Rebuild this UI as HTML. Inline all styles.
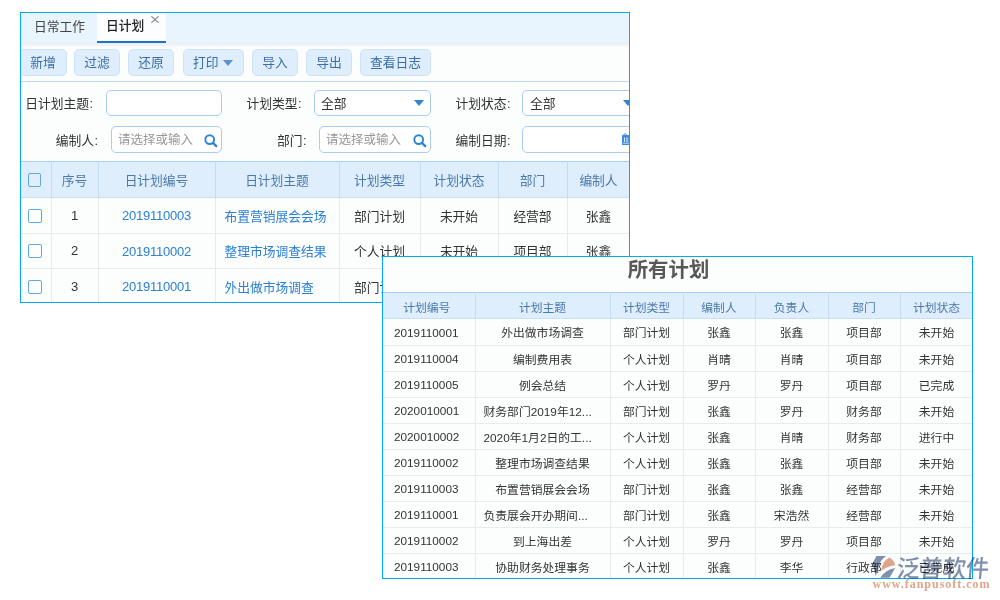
<!DOCTYPE html>
<html lang="zh-CN">
<head>
<meta charset="utf-8">
<title>日计划</title>
<style>
*{box-sizing:border-box;margin:0;padding:0}
html,body{width:1000px;height:600px;background:#fff;overflow:hidden}
body{position:relative;font-family:"Liberation Sans","Noto Sans CJK SC",sans-serif;color:#333}
.abs{position:absolute}
#p1{position:absolute;left:20px;top:12px;width:610px;height:291px;border:1px solid #04a9ee;background:#fcfdfd;overflow:hidden;font-size:12.75px}
#p1 .tabs{position:absolute;left:0;top:0;width:608px;height:30px;background:#e8f5fe}
#p1 .tabshadow{position:absolute;left:0;top:30px;width:608px;height:5px;background:linear-gradient(#ececee,#fcfdfe)}
#p1 .tab{position:absolute;top:0;height:30px;line-height:27px;white-space:nowrap}
#p1 .tab.on{left:76px;width:68.5px;background:#fbfdff;border-bottom:2px solid #1b74c4;color:#222;font-weight:500;padding-left:9px;line-height:26px}
#p1 .x{position:absolute;left:130px;top:2.5px;width:8px;height:7px}
.btn{position:absolute;top:36px;height:27px;line-height:26px;border:1px solid #cfe2f5;background:#dfeefc;border-radius:5px;color:#3c6ea6;text-align:center;white-space:nowrap}
.tbline{position:absolute;left:0;top:68px;width:608px;height:1px;background:#b9d9f2}
.lbl{position:absolute;height:26px;line-height:27.5px;white-space:nowrap;color:#333;text-align:right}
.inp{position:absolute;height:26px;border:1px solid #a8cdee;border-radius:5px;background:#fff;line-height:25px;white-space:nowrap;color:#333}
.ph{color:#999;font-size:12.5px}
.tri{position:absolute;width:0;height:0;border-left:5px solid transparent;border-right:5px solid transparent;border-top:6px solid #2d85d6}
table{border-collapse:collapse;table-layout:fixed}
#t1{position:absolute;left:0;top:148px;width:609px}
#t1 th{height:36px;background:#dfeefc;color:#4b79ab;font-weight:normal;border-top:1px solid #a4cff1;border-right:1px solid #c4dcf1;border-bottom:1px solid #c9e0f4;text-align:center;white-space:nowrap}
#t1 td{height:36px;border-right:1px solid #e9e9e9;border-bottom:1px solid #ebebeb;text-align:center;white-space:nowrap;color:#333;background:#fcfdfd;padding-bottom:1px}
#t1 td.l{text-align:left;padding-left:9px}
#t1 a{color:#2b80d6;text-decoration:none}
.cb{display:inline-block;position:relative;left:-1px;width:14px;height:14px;border:1px solid #62a8e2;border-radius:2px;background:#fdfeff;vertical-align:middle}
#p2{position:absolute;left:382px;top:256px;width:591px;height:323px;border:1px solid #04a9ee;background:#fcfdfd;overflow:hidden;font-size:11.8px}
#p2 h1{position:absolute;left:0;top:0;width:571px;height:35px;line-height:27px;text-align:center;font-size:20.4px;color:#585858;font-weight:bold}
#t2{position:absolute;left:0;top:35px;width:590px}
#t2 th{height:26px;background:#dfeefc;color:#4b79ab;font-weight:normal;border-top:1px solid #a4cff1;border-right:1px solid #c4dcf1;border-bottom:1px solid #c9e0f4;text-align:center;white-space:nowrap}
#t2 td{padding-bottom:1px;height:26px;border-right:1px solid #e9e9e9;border-bottom:1px solid #ebebeb;text-align:center;white-space:nowrap;color:#333;background:#fcfdfd}
#wm{position:absolute;left:860px;top:545px;width:140px;height:55px;mix-blend-mode:multiply}
#t2 td:first-child{text-align:left;padding-left:11px;font-size:11.75px;padding-top:1px}
#t2 th:first-child{padding-right:4px}
#t2 td.e{text-align:left;padding-left:8px}
.n{font-size:13px;letter-spacing:-0.25px}
.lbl i{font-style:normal;margin-left:0.5px;margin-right:1px}
#t2 tr:nth-child(2) td{height:27px}
#t1 th .cb{width:13px;left:-1.5px;background:transparent}
#t1 th{padding-bottom:1px}
#t1 tr:nth-child(3) td{height:35px}
#t2 th{padding-top:2px}
#t1 a.n{position:relative;top:0.5px}
</style>
</head>
<body>
<div id="p1">
  <div class="tabs"></div>
  <div class="tabshadow"></div>
  <div class="tab" style="left:13px;color:#444">日常工作</div>
  <div class="tab on">日计划</div>
  <svg class="x" viewBox="0 0 8 7" preserveAspectRatio="none"><path d="M0.4 0.3L7.6 6.7M7.6 0.3L0.4 6.7" stroke="#888" stroke-width="1.1" fill="none"/></svg>
  <div class="btn" style="left:-2px;width:48px">新增</div>
  <div class="btn" style="left:53px;width:46px">过滤</div>
  <div class="btn" style="left:107px;width:46px">还原</div>
  <div class="btn" style="left:162px;width:61px;text-align:left;padding-left:9px">打印</div>
  <div class="tri" style="left:201.5px;top:47px;border-top-color:#5a93cf"></div>
  <div class="btn" style="left:231px;width:46px">导入</div>
  <div class="btn" style="left:285px;width:46px">导出</div>
  <div class="btn" style="left:339px;width:71px">查看日志</div>
  <div class="tbline"></div>

  <div class="lbl" style="left:0;width:73px;top:77px">日计划主题<i>:</i></div>
  <div class="inp" style="left:85px;top:77px;width:116px"></div>
  <div class="lbl" style="left:200px;width:81.5px;top:77px">计划类型<i>:</i></div>
  <div class="inp" style="left:293px;top:77px;width:117px;padding-left:6px">全部</div>
  <div class="tri" style="left:393px;top:87px"></div>
  <div class="lbl" style="left:410px;width:80.5px;top:77px">计划状态<i>:</i></div>
  <div class="inp" style="left:501px;top:77px;width:117px;padding-left:7px">全部</div>
  <div class="tri" style="left:602px;top:87px"></div>

  <div class="lbl" style="left:0;width:78px;top:114px">编制人<i>:</i></div>
  <div class="inp" style="left:90px;top:113px;height:27px;line-height:26px;width:111px;padding-left:6px"><span class="ph">请选择或输入</span></div>
  <svg class="abs" style="left:183px;top:121px" width="14" height="14" viewBox="0 0 14 14"><circle cx="5.7" cy="5.6" r="4.4" fill="none" stroke="#2d85d6" stroke-width="1.9"/><path d="M9.2 9.1L12.2 12.1" stroke="#2d85d6" stroke-width="2.4" stroke-linecap="round"/></svg>
  <div class="lbl" style="left:200px;width:86.5px;top:114px">部门<i>:</i></div>
  <div class="inp" style="left:298px;top:113px;height:27px;line-height:26px;width:112px;padding-left:6px"><span class="ph">请选择或输入</span></div>
  <svg class="abs" style="left:392px;top:121px" width="14" height="14" viewBox="0 0 14 14"><circle cx="5.7" cy="5.6" r="4.4" fill="none" stroke="#2d85d6" stroke-width="1.9"/><path d="M9.2 9.1L12.2 12.1" stroke="#2d85d6" stroke-width="2.4" stroke-linecap="round"/></svg>
  <div class="lbl" style="left:410px;width:80.5px;top:114px">编制日期<i>:</i></div>
  <div class="inp" style="left:501px;top:113px;height:27px;width:117px"></div>
  <svg class="abs" style="left:601px;top:120px" width="12" height="12" viewBox="0 0 12 12"><circle cx="3.2" cy="1.7" r="1.1" fill="none" stroke="#3d8bd9" stroke-width="0.9"/><rect x="0" y="2" width="12" height="10" rx="0.6" fill="#3d8bd9"/><path d="M2.6 4.4v4.6M5 4.4v4.6M7.4 4.4v4.6M9.8 4.4v4.6" stroke="#e6f0fb" stroke-width="1"/><path d="M1 10.2h10" stroke="#e6f0fb" stroke-width="0.8"/></svg>

  <table id="t1">
    <colgroup><col style="width:30px"><col style="width:47px"><col style="width:117px"><col style="width:124px"><col style="width:81px"><col style="width:78px"><col style="width:69px"><col style="width:63px"></colgroup>
    <tr><th><span class="cb"></span></th><th>序号</th><th>日计划编号</th><th>日计划主题</th><th>计划类型</th><th>计划状态</th><th>部门</th><th>编制人</th></tr>
    <tr><td><span class="cb"></span></td><td class="n">1</td><td><a class="n">2019110003</a></td><td class="l"><a>布置营销展会会场</a></td><td>部门计划</td><td>未开始</td><td>经营部</td><td>张鑫</td></tr>
    <tr><td><span class="cb"></span></td><td class="n">2</td><td><a class="n">2019110002</a></td><td class="l"><a>整理市场调查结果</a></td><td>个人计划</td><td>未开始</td><td>项目部</td><td>张鑫</td></tr>
    <tr><td><span class="cb"></span></td><td class="n">3</td><td><a class="n">2019110001</a></td><td class="l"><a>外出做市场调查</a></td><td>部门计划</td><td>未开始</td><td>项目部</td><td>张鑫</td></tr>
  </table>
</div>

<div id="p2">
  <h1>所有计划</h1>
  <table id="t2">
    <colgroup><col style="width:92px"><col style="width:135px"><col style="width:73px"><col style="width:72px"><col style="width:73px"><col style="width:72px"><col style="width:73px"></colgroup>
    <tr><th>计划编号</th><th>计划主题</th><th>计划类型</th><th>编制人</th><th>负责人</th><th>部门</th><th>计划状态</th></tr>
    <tr><td>2019110001</td><td>外出做市场调查</td><td>部门计划</td><td>张鑫</td><td>张鑫</td><td>项目部</td><td>未开始</td></tr>
    <tr><td>2019110004</td><td>编制费用表</td><td>个人计划</td><td>肖晴</td><td>肖晴</td><td>项目部</td><td>未开始</td></tr>
    <tr><td>2019110005</td><td>例会总结</td><td>个人计划</td><td>罗丹</td><td>罗丹</td><td>项目部</td><td>已完成</td></tr>
    <tr><td>2020010001</td><td class="e">财务部门2019年12...</td><td>部门计划</td><td>张鑫</td><td>罗丹</td><td>财务部</td><td>未开始</td></tr>
    <tr><td>2020010002</td><td class="e">2020年1月2日的工...</td><td>个人计划</td><td>张鑫</td><td>肖晴</td><td>财务部</td><td>进行中</td></tr>
    <tr><td>2019110002</td><td>整理市场调查结果</td><td>个人计划</td><td>张鑫</td><td>张鑫</td><td>项目部</td><td>未开始</td></tr>
    <tr><td>2019110003</td><td>布置营销展会会场</td><td>部门计划</td><td>张鑫</td><td>张鑫</td><td>经营部</td><td>未开始</td></tr>
    <tr><td>2019110001</td><td class="e">负责展会开办期间...</td><td>部门计划</td><td>张鑫</td><td>宋浩然</td><td>经营部</td><td>未开始</td></tr>
    <tr><td>2019110002</td><td>到上海出差</td><td>个人计划</td><td>罗丹</td><td>罗丹</td><td>项目部</td><td>未开始</td></tr>
    <tr><td>2019110003</td><td>协助财务处理事务</td><td>个人计划</td><td>张鑫</td><td>李华</td><td>行政部</td><td>已完成</td></tr>
  </table>
</div>

<svg id="wm" viewBox="860 545 140 55">
  <path d="M876.5 556L886.1 556Q880.5 560 879 565Q877 570 875.9 576.6L872.5 563.5Z" fill="#8190ae"/>
  <path d="M881.3 571.5Q882 561 889.5 557.4Q894 560 895.2 565.3Q886 566 881.3 571.5Z" fill="#e4a388"/>
  <path d="M880.2 577.8Q885 570 895.2 568.1L889.5 577.8Z" fill="#8190ae"/>
  <text transform="translate(896 576.8) skewX(-5)" font-family="'Liberation Sans','Noto Sans CJK SC',sans-serif" font-size="24" font-weight="500" fill="#8190ae" textLength="92.5" lengthAdjust="spacingAndGlyphs">泛普软件</text>
  <text x="872.5" y="587.7" font-family="'Liberation Serif',serif" font-size="12" font-weight="bold" fill="#e4a388" textLength="117" lengthAdjust="spacing">www.fanpusoft.com</text>
</svg>
</body>
</html>
